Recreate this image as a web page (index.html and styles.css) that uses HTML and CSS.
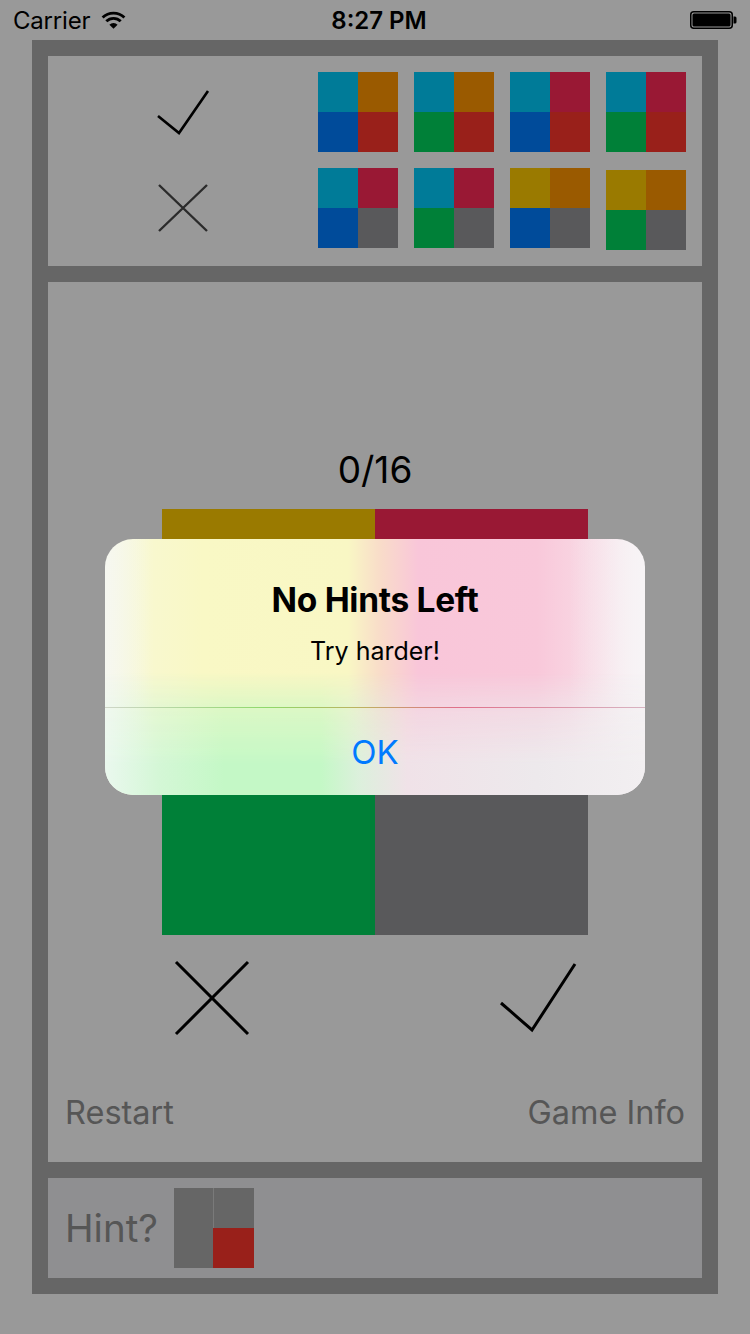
FILE: index.html
```html
<!DOCTYPE html>
<html>
<head>
<meta charset="utf-8">
<link rel="stylesheet" href="styles.css">
</head>
<body>
<div class="screen">
  <div class="status">
    <div class="status-left">
      <span class="carrier">Carrier</span>
      <svg class="wifi" viewBox="0 0 25 18" width="25" height="18">
        <path d="M1.6 6.6 A15.5 15.5 0 0 1 23.4 6.6" fill="none" stroke="#000" stroke-width="2.8"/>
        <path d="M5.3 10.3 A10.2 10.2 0 0 1 19.7 10.3" fill="none" stroke="#000" stroke-width="2.8"/>
        <path d="M12.5 17.8 L8.4 13.7 A5.8 5.8 0 0 1 16.6 13.7 Z" fill="#000"/>
      </svg>
    </div>
    <div class="time">8:27 PM</div>
    <div class="status-right">
      <svg class="battery" viewBox="0 0 48 18" width="48" height="18">
        <rect x="0.75" y="0.75" width="41.5" height="16.5" rx="3" fill="none" stroke="#000" stroke-width="1.5"/>
        <rect x="2.5" y="2.5" width="38" height="13" rx="1.5" fill="#000"/>
        <path d="M43.5 5.5 h1.5 a1.5 1.5 0 0 1 1.5 1.5 v4 a1.5 1.5 0 0 1 -1.5 1.5 h-1.5 z" fill="#000"/>
      </svg>
    </div>
  </div>

  <div class="frame">
    <section class="panel top-panel">
      <div class="legend">
        <div class="legend-cell">
          <svg viewBox="0 0 54 46" width="54" height="46"><polyline points="2,27 23,44 52,2" fill="none" stroke="#000" stroke-width="2.6"/></svg>
        </div>
        <div class="legend-cell">
          <svg viewBox="0 0 54 52" width="54" height="52"><path d="M3 3 L51 49 M51 3 L3 49" fill="none" stroke="#2b2b2b" stroke-width="2.4"/></svg>
        </div>
      </div>
      <div class="tiles">
        <div class="tile"><i class="teal"></i><i class="orange"></i><i class="blue"></i><i class="red"></i></div>
        <div class="tile"><i class="teal"></i><i class="orange"></i><i class="green"></i><i class="red"></i></div>
        <div class="tile"><i class="teal"></i><i class="crimson"></i><i class="blue"></i><i class="red"></i></div>
        <div class="tile"><i class="teal"></i><i class="crimson"></i><i class="green"></i><i class="red"></i></div>
        <div class="tile"><i class="teal"></i><i class="crimson"></i><i class="blue"></i><i class="gray"></i></div>
        <div class="tile"><i class="teal"></i><i class="crimson"></i><i class="green"></i><i class="gray"></i></div>
        <div class="tile"><i class="gold"></i><i class="orange"></i><i class="blue"></i><i class="gray"></i></div>
        <div class="tile tile-low"><i class="gold"></i><i class="orange"></i><i class="green"></i><i class="gray"></i></div>
      </div>
    </section>

    <section class="panel main-panel">
      <div class="score">0/16</div>
      <div class="big-tile"><i class="gold"></i><i class="crimson"></i><i class="green"></i><i class="gray"></i></div>
      <div class="answer-row">
        <svg viewBox="0 0 76 76" width="76" height="76"><path d="M2 2 L74 74 M74 2 L2 74" fill="none" stroke="#000" stroke-width="3"/></svg>
        <svg viewBox="0 0 78 72" width="78" height="72"><polyline points="2,41 33,68 76,2" fill="none" stroke="#000" stroke-width="3"/></svg>
      </div>
      <div class="actions">
        <span class="action">Restart</span>
        <span class="action">Game Info</span>
      </div>
    </section>

    <section class="panel hint-panel">
      <span class="hint-label">Hint?</span>
      <div class="hint-tile">
        <i class="h-left"></i><i class="h-top"></i><i class="h-red"></i>
      </div>
    </section>
  </div>

  <div class="alert">
    <div class="alert-body">
      <div class="alert-title">No Hints Left</div>
      <div class="alert-msg">Try harder!</div>
    </div>
    <div class="alert-sep"></div>
    <div class="alert-btn">OK</div>
  </div>
</div>
</body>
</html>
```

FILE: styles.css
```css
* { box-sizing: border-box; margin: 0; padding: 0; }

html, body {
  width: 750px;
  height: 1334px;
  background: #999999;
  overflow: hidden;
}

body {
  font-family: Inter, Roboto, "Noto Sans", sans-serif;
  color: #000;
}

.screen {
  position: relative;
  width: 750px;
  height: 1334px;
}

/* status bar */
.status {
  height: 40px;
  display: flex;
  align-items: center;
  justify-content: space-between;
  padding: 0 12px 0 13px;
  position: relative;
}
.status-left {
  display: flex;
  align-items: center;
  gap: 11px;
}
.carrier {
  font-size: 24px;
  letter-spacing: -0.2px;
}
.time {
  position: absolute;
  left: 0;
  right: 0;
  text-align: center;
  font-size: 24px;
  font-weight: 600;
  padding-left: 8px;
}
.status-right {
  display: flex;
  align-items: center;
  position: relative;
  z-index: 1;
}

/* frame */
.frame {
  margin: 0 32px;
  height: 1254px;
  background: #666666;
  padding: 16px;
  display: flex;
  flex-direction: column;
  gap: 16px;
}
.panel {
  background: #999999;
}

/* top panel */
.top-panel {
  height: 210px;
  display: flex;
  padding-top: 16px;
}
.legend {
  width: 270px;
  display: flex;
  flex-direction: column;
  gap: 16px;
}
.legend-cell {
  height: 80px;
  display: flex;
  align-items: center;
  justify-content: center;
}
.tiles {
  display: grid;
  grid-template-columns: repeat(4, 80px);
  grid-auto-rows: 80px;
  gap: 16px;
  align-items: start;
}
.tile {
  width: 80px;
  height: 80px;
  display: grid;
  grid-template-columns: 1fr 1fr;
  grid-template-rows: 1fr 1fr;
}
.tile-low { margin-top: 2px; }

.teal { background: #007b98; }
.orange { background: #9a5a00; }
.blue { background: #004b9a; }
.red { background: #99201a; }
.green { background: #008038; }
.crimson { background: #991834; }
.gray { background: #59595b; }
.gold { background: #9a7a00; }

/* main panel */
.main-panel {
  height: 880px;
  display: flex;
  flex-direction: column;
  align-items: center;
}
.score {
  margin-top: 166px;
  height: 44px;
  line-height: 44px;
  font-size: 37px;
}
.big-tile {
  margin-top: 17px;
  width: 426px;
  height: 426px;
  display: grid;
  grid-template-columns: 213px 213px;
  grid-template-rows: 213px 213px;
}
.answer-row {
  margin-top: 25px;
  width: 426px;
  height: 76px;
  display: flex;
  justify-content: space-between;
  align-items: center;
  padding: 0 11px 0 12px;
}
.actions {
  margin-top: 57px;
  width: 100%;
  display: flex;
  justify-content: space-between;
  padding: 0 17px;
}
.action {
  font-size: 32.5px;
  line-height: 40px;
  color: #565656;
}

/* hint panel */
.hint-panel {
  height: 100px;
  background: #8f8f91;
  display: flex;
  align-items: center;
  padding-left: 17px;
  gap: 16px;
}
.hint-label {
  font-size: 38.5px;
  color: #565656;
}
.hint-tile {
  width: 80px;
  height: 80px;
  display: grid;
  grid-template-columns: 39px 41px;
  grid-template-rows: 40px 40px;
}
.h-left {
  grid-row: 1 / 3;
  background: #666666;
}
.h-top {
  background: #666666;
  border-left: 1px solid #7a7a7a;
}
.h-red {
  background: #99201a;
}

/* alert */
.alert {
  position: absolute;
  left: 105px;
  top: 539px;
  width: 540px;
  height: 256px;
  border-radius: 28px;
  overflow: hidden;
  display: flex;
  flex-direction: column;
  background:
    linear-gradient(to right, rgba(246, 247, 242, 0.9) 0%, rgba(246, 247, 242, 0) 9%),
    linear-gradient(to left, rgba(247, 244, 246, 0.9) 0%, rgba(247, 244, 246, 0) 14%),
    linear-gradient(to right, #f6f8e2 0%, #f8f8cf 8%, #f9f8c5 18%, #f9f7c4 45%, #f9dcc9 51%, #f9c6d9 58%, #f9c8da 80%, #f8dce6 92%, #f7f3f5 100%);
}
.alert::before {
  content: "";
  position: absolute;
  inset: 0;
  background:
    linear-gradient(to right, #eaf8ee 0%, #d4f7d6 10%, #c4f8c6 22%, #c4f8c6 40%, #dcf0dc 47%, #f0e2e8 56%, #ede9ec 80%, #f2eff1 100%);
  -webkit-mask-image: linear-gradient(to bottom, transparent 52%, rgba(0,0,0,0.6) 68%, #000 88%);
  mask-image: linear-gradient(to bottom, transparent 52%, rgba(0,0,0,0.6) 68%, #000 88%);
}
.alert-body {
  position: relative;
  height: 168px;
  padding-top: 41px;
  text-align: center;
}
.alert-title {
  font-size: 33.5px;
  font-weight: 700;
  line-height: 40px;
  letter-spacing: -0.3px;
}
.alert-msg {
  margin-top: 15px;
  font-size: 25px;
  line-height: 32px;
}
.alert-sep {
  position: relative;
  height: 1px;
  background: linear-gradient(to right, #cfd6c8 0%, #8fd86a 30%, #c0b060 48%, #e0708a 65%, #d8b4c2 100%);
}
.alert-btn {
  position: relative;
  flex: 1;
  display: flex;
  align-items: center;
  justify-content: center;
  font-size: 33px;
  color: #007aff;
}
```
